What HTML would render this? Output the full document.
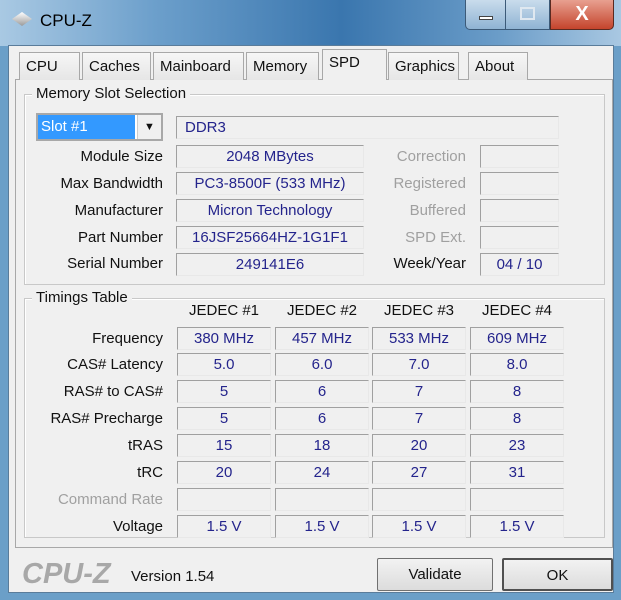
<!DOCTYPE html>
<html><head><style>
*{margin:0;padding:0;box-sizing:border-box}
body{width:621px;height:600px;overflow:hidden;background:#6b9fc8;font-family:"Liberation Sans",sans-serif;font-size:15px;color:#111;position:relative}
.a{position:absolute}
#title{left:0;top:0;width:621px;height:46px;background:linear-gradient(90deg,#a9c9e3 0%,#6c9fcb 25%,#3a76ae 55%,#6a9cc8 80%,#a9c8e2 100%)}
#client{left:8px;top:45px;width:606px;height:548px;background:#f0f0f0;border:1px solid #5a7c9a}
.box{position:absolute;background:#f0f0f0;border:1px solid #b8b8b8;border-top-color:#a0a0a0;border-left-color:#a0a0a0;border-right-color:#e8e8e8;border-bottom-color:#e8e8e8;color:#24248c;text-align:center;line-height:22px;height:23px}
.lbl{position:absolute;text-align:right;width:150px;line-height:22px}
.grp{position:absolute;border:1px solid #c8c8c8;box-shadow:inset 1px 1px 0 #fff}
.gt{position:absolute;background:#f0f0f0;padding:0 4px;line-height:16px}
.tab{position:absolute;top:52px;height:28px;border:1px solid #a8a8a8;border-bottom:none;background:linear-gradient(#f6f6f6,#e6e6e6);line-height:28px;padding-left:6px}
.btn{position:absolute;border:1px solid #707070;background:linear-gradient(#f2f2f2,#dcdcdc);text-align:center;line-height:31px;border-radius:2px}
.g{color:#a0a0a0}
</style></head><body>
<div id="title" class="a"></div>
<div class="a" style="left:12px;top:12px;width:20px;height:14px;clip-path:polygon(50% 0,100% 50%,50% 100%,0 50%);background:linear-gradient(#fff,#9a9a9a)"></div>
<div class="a" style="left:40px;top:11px;font-size:17px;color:#000">CPU-Z</div>
<div class="a" style="left:465px;top:0;width:41px;height:30px;border:1px solid #3c5a78;border-top:none;border-radius:0 0 0 5px;background:linear-gradient(#c9dcec,#8fb3d3)"><div class="a" style="left:13px;top:16px;width:14px;height:4px;background:#fff;border:1px solid #444"></div></div>
<div class="a" style="left:506px;top:0;width:44px;height:30px;border:1px solid #3c5a78;border-top:none;border-left:none;background:linear-gradient(#c9dcec,#8fb3d3)"><div class="a" style="left:14px;top:7px;width:15px;height:13px;border:2px solid #dfe8f0"></div></div>
<div class="a" style="left:550px;top:0;width:64px;height:30px;border:1px solid #5a2a20;border-top:none;border-radius:0 0 5px 0;background:linear-gradient(#e8a090,#c4442c);color:#fff;font-weight:bold;font-size:20px;text-align:center;line-height:28px">X</div>
<div id="client" class="a"></div>
<div class="a" style="left:15px;top:79px;width:598px;height:469px;border:1px solid #a8a8a8;background:#f0f0f0"></div>
<div class="tab" style="left:19px;width:61px">CPU</div>
<div class="tab" style="left:82px;width:69px">Caches</div>
<div class="tab" style="left:153px;width:91px">Mainboard</div>
<div class="tab" style="left:246px;width:73px">Memory</div>
<div class="tab" style="left:322px;top:49px;height:31px;width:65px;background:#f0f0f0;line-height:26px">SPD</div>
<div class="tab" style="left:388px;width:71px">Graphics</div>
<div class="tab" style="left:468px;width:60px">About</div>
<div class="grp" style="left:24px;top:94px;width:581px;height:191px"></div>
<div class="gt" style="left:32px;top:86px">Memory Slot Selection</div>
<div class="a" style="left:36px;top:113px;width:127px;height:28px;border:2px solid #a8a8a8;background:#fff"></div>
<div class="a" style="left:38px;top:115px;width:97px;height:24px;background:#3399ff;color:#fff;line-height:24px;padding-left:3px">Slot #1</div>
<div class="a" style="left:137px;top:115px;width:24px;height:24px;background:#f0f0f0;border-left:1px solid #ccc;text-align:center;font-size:11px;line-height:24px">&#9660;</div>
<div class="box" style="left:176px;top:116px;width:383px;text-align:left;padding-left:8px">DDR3</div>
<div class="lbl" style="left:13px;top:146px">Module Size</div>
<div class="lbl" style="left:13px;top:173px">Max Bandwidth</div>
<div class="lbl" style="left:13px;top:200px">Manufacturer</div>
<div class="lbl" style="left:13px;top:227px">Part Number</div>
<div class="lbl" style="left:13px;top:253px">Serial Number</div>
<div class="box" style="left:176px;top:145px;width:188px">2048 MBytes</div>
<div class="box" style="left:176px;top:172px;width:188px">PC3-8500F (533 MHz)</div>
<div class="box" style="left:176px;top:199px;width:188px">Micron Technology</div>
<div class="box" style="left:176px;top:226px;width:188px">16JSF25664HZ-1G1F1</div>
<div class="box" style="left:176px;top:253px;width:188px">249141E6</div>
<div class="lbl g" style="left:316px;top:146px">Correction</div>
<div class="lbl g" style="left:316px;top:173px">Registered</div>
<div class="lbl g" style="left:316px;top:200px">Buffered</div>
<div class="lbl g" style="left:316px;top:227px">SPD Ext.</div>
<div class="lbl" style="left:316px;top:253px">Week/Year</div>
<div class="box" style="left:480px;top:145px;width:79px"></div>
<div class="box" style="left:480px;top:172px;width:79px"></div>
<div class="box" style="left:480px;top:199px;width:79px"></div>
<div class="box" style="left:480px;top:226px;width:79px"></div>
<div class="box" style="left:480px;top:253px;width:79px">04 / 10</div>
<div class="grp" style="left:24px;top:298px;width:581px;height:240px"></div>
<div class="gt" style="left:32px;top:290px">Timings Table</div>
<div class="a" style="left:177px;top:302px;width:94px;text-align:center">JEDEC #1</div>
<div class="a" style="left:275px;top:302px;width:94px;text-align:center">JEDEC #2</div>
<div class="a" style="left:372px;top:302px;width:94px;text-align:center">JEDEC #3</div>
<div class="a" style="left:470px;top:302px;width:94px;text-align:center">JEDEC #4</div>
<div class="lbl" style="left:13px;top:328px">Frequency</div>
<div class="lbl" style="left:13px;top:354px">CAS# Latency</div>
<div class="lbl" style="left:13px;top:381px">RAS# to CAS#</div>
<div class="lbl" style="left:13px;top:408px">RAS# Precharge</div>
<div class="lbl" style="left:13px;top:435px">tRAS</div>
<div class="lbl" style="left:13px;top:462px">tRC</div>
<div class="lbl g" style="left:13px;top:489px">Command Rate</div>
<div class="lbl" style="left:13px;top:516px">Voltage</div>
<div class="box" style="left:177px;top:327px;width:94px">380 MHz</div><div class="box" style="left:275px;top:327px;width:94px">457 MHz</div><div class="box" style="left:372px;top:327px;width:94px">533 MHz</div><div class="box" style="left:470px;top:327px;width:94px">609 MHz</div>
<div class="box" style="left:177px;top:353px;width:94px">5.0</div><div class="box" style="left:275px;top:353px;width:94px">6.0</div><div class="box" style="left:372px;top:353px;width:94px">7.0</div><div class="box" style="left:470px;top:353px;width:94px">8.0</div>
<div class="box" style="left:177px;top:380px;width:94px">5</div><div class="box" style="left:275px;top:380px;width:94px">6</div><div class="box" style="left:372px;top:380px;width:94px">7</div><div class="box" style="left:470px;top:380px;width:94px">8</div>
<div class="box" style="left:177px;top:407px;width:94px">5</div><div class="box" style="left:275px;top:407px;width:94px">6</div><div class="box" style="left:372px;top:407px;width:94px">7</div><div class="box" style="left:470px;top:407px;width:94px">8</div>
<div class="box" style="left:177px;top:434px;width:94px">15</div><div class="box" style="left:275px;top:434px;width:94px">18</div><div class="box" style="left:372px;top:434px;width:94px">20</div><div class="box" style="left:470px;top:434px;width:94px">23</div>
<div class="box" style="left:177px;top:461px;width:94px">20</div><div class="box" style="left:275px;top:461px;width:94px">24</div><div class="box" style="left:372px;top:461px;width:94px">27</div><div class="box" style="left:470px;top:461px;width:94px">31</div>
<div class="box" style="left:177px;top:488px;width:94px"></div><div class="box" style="left:275px;top:488px;width:94px"></div><div class="box" style="left:372px;top:488px;width:94px"></div><div class="box" style="left:470px;top:488px;width:94px"></div>
<div class="box" style="left:177px;top:515px;width:94px">1.5 V</div><div class="box" style="left:275px;top:515px;width:94px">1.5 V</div><div class="box" style="left:372px;top:515px;width:94px">1.5 V</div><div class="box" style="left:470px;top:515px;width:94px">1.5 V</div>
<div class="a" style="left:22px;top:558px;font-size:29px;font-weight:bold;font-style:italic;color:#a8a8a8">CPU-Z</div>
<div class="a" style="left:131px;top:568px;font-size:15px">Version 1.54</div>
<div class="btn" style="left:377px;top:558px;width:116px;height:33px">Validate</div>
<div class="btn" style="left:502px;top:558px;width:111px;height:33px;border:2px solid #505050">OK</div>
</body></html>
